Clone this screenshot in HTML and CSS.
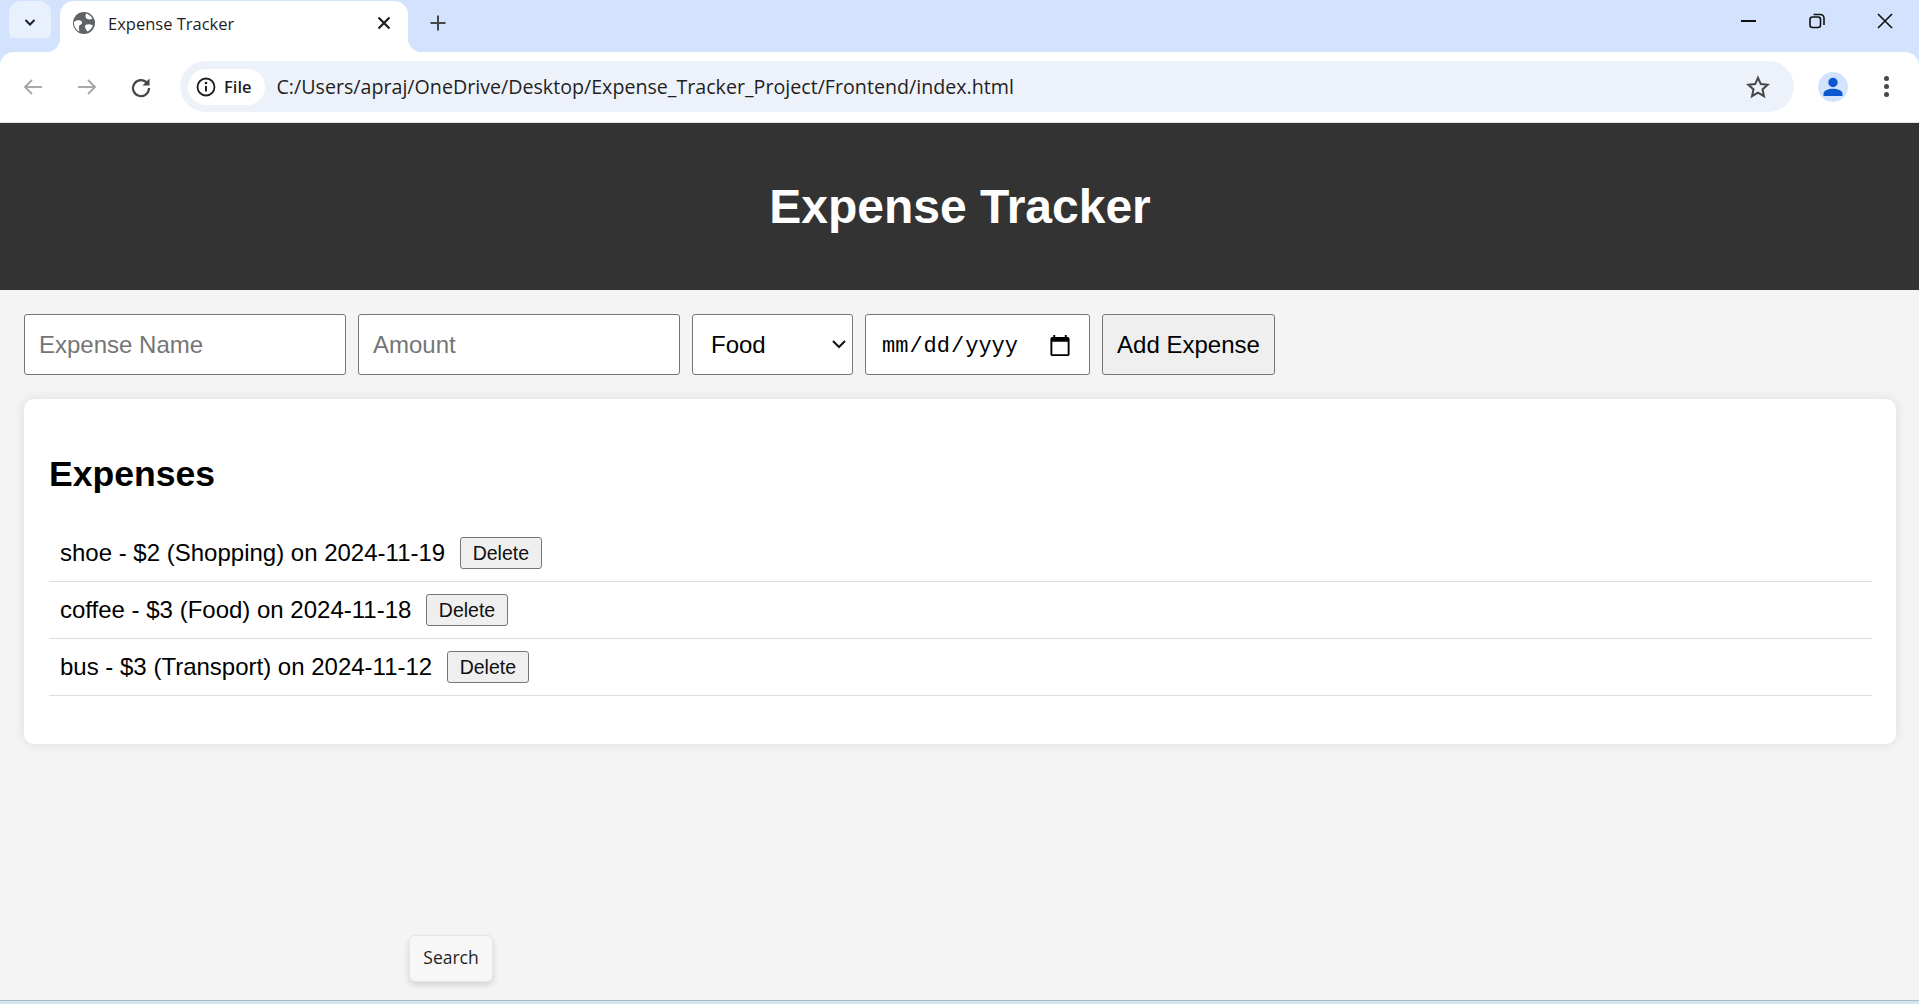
FILE: index.html
```html
<!DOCTYPE html>
<html lang="en">
<head>
    <meta charset="UTF-8">
    <meta name="viewport" content="width=device-width, initial-scale=1.0">
    <title>Expense Tracker</title>
    <link rel="stylesheet" href="styles.css">
</head>
<body>
    <!-- browser frame -->
    <div class="tabstrip">
        <div class="tab-search">
            <svg width="16" height="16" viewBox="0 0 16 16"><path d="M3.5 6l4.5 4.5L12.500 6" fill="none" stroke="#1f1f1f" stroke-width="2"/></svg>
        </div>
        <div class="tab">
            <svg class="favicon" width="22" height="22" viewBox="0 0 22 22">
                <circle cx="11" cy="11" r="11" fill="#5f6368"/>
                <path d="M.8 10c2.500-2 6-2.500 8-.5 1 1.200-.2 3-2 3.500-1.200.5-.8 3-.5 6.500C3.500 18.500 1 15 .8 10zM13 1.500c2.500.5 5 2.500 6.500 5-2 1.500-5.500 1-6.500-.5-.8-1.200-.5-3 0-4.500zM12.500 13c2-1 5-.8 7.500.5-1 2.500-3 5-5.500 6-1.500-1.500-3.500-5-2-6.500z" fill="#fff"/>
            </svg>
            <span class="tab-title">Expense Tracker</span>
            <svg class="tab-close" width="16" height="16" viewBox="0 0 16 16"><path d="M2.500 2.500l11 11M13.500 2.500l-11 11" stroke="#1f1f1f" stroke-width="2.200"/></svg>
        </div>
        <svg class="new-tab" width="18" height="18" viewBox="0 0 18 18"><path d="M9 1.500v15M1.500 9h15" stroke="#444746" stroke-width="2"/></svg>
        <div class="window-controls">
            <svg width="16" height="16" viewBox="0 0 16 16"><path d="M0 8h15" stroke="#111" stroke-width="2"/></svg>
            <svg width="16" height="16" viewBox="0 0 16 16"><rect x="1" y="4" width="10.500" height="10.500" rx="2.500" fill="none" stroke="#111" stroke-width="1.600"/><path d="M4.500 1.500h7a3.500 3.500 0 0 1 3.500 3.500v7" fill="none" stroke="#111" stroke-width="1.600"/></svg>
            <svg width="16" height="16" viewBox="0 0 16 16"><path d="M1 1l14 14M15 1L1 15" stroke="#111" stroke-width="1.600"/></svg>
        </div>
    </div>
    <div class="toolbar">
        <svg class="nav-icon back" width="22" height="22" viewBox="0 0 22 22"><path d="M20 11H3M10 4l-7 7 7 7" fill="none" stroke="#a8abae" stroke-width="2"/></svg>
        <svg class="nav-icon forward" width="22" height="22" viewBox="0 0 22 22"><path d="M2 11h17M12 4l7 7-7 7" fill="none" stroke="#a8abae" stroke-width="2"/></svg>
        <svg class="nav-icon reload" width="22" height="22" viewBox="0 0 22 22"><path d="M17.500 7.500A8 8 0 1 0 19 12" fill="none" stroke="#474747" stroke-width="2.200"/><path d="M19.500 2.500v7h-7z" fill="#474747"/></svg>
        <div class="omnibox">
            <div class="chip">
                <svg width="20" height="20" viewBox="0 0 20 20"><circle cx="10" cy="10" r="8.500" fill="none" stroke="#1f1f1f" stroke-width="1.800"/><path d="M10 9v5.500" stroke="#1f1f1f" stroke-width="2"/><circle cx="10" cy="6" r="1.300" fill="#1f1f1f"/></svg>
                <span>File</span>
            </div>
            <span class="url">C:/Users/apraj/OneDrive/Desktop/Expense_Tracker_Project/Frontend/index.html</span>
            <svg class="star" width="24" height="24" viewBox="0 0 24 24"><path d="M12 2.800l2.800 6.300 6.800.7-5.100 4.600 1.500 6.800-6-3.500-6 3.500 1.500-6.800-5.100-4.600 6.800-.7z" fill="none" stroke="#474747" stroke-width="2"/></svg>
        </div>
        <div class="avatar">
            <svg width="22" height="22" viewBox="0 0 22 22"><circle cx="11" cy="6.500" r="4.700" fill="#0b57d0"/><path d="M1.500 20v-2.500c0-3 5-4.700 9.500-4.700s9.500 1.700 9.500 4.700V20z" fill="#0b57d0"/></svg>
        </div>
        <div class="menu-dots"><i></i><i></i><i></i></div>
    </div>

    <!-- page -->
    <div class="page">
        <header class="site-header">
            <h1>Expense Tracker</h1>
        </header>
        <form class="expense-form">
            <input class="field field-text" type="text" placeholder="Expense Name">
            <input class="field field-text" type="number" placeholder="Amount">
            <select class="field field-select">
                <option>Food</option>
                <option>Transport</option>
                <option>Shopping</option>
                <option>Other</option>
            </select>
            <input class="field field-date" type="date">
            <button class="add-btn" type="button">Add Expense</button>
        </form>
        <section class="expense-card">
            <h2>Expenses</h2>
            <ul class="expense-list">
                <li>shoe - $2 (Shopping) on 2024-11-19 <button class="delete-btn" type="button">Delete</button></li>
                <li>coffee - $3 (Food) on 2024-11-18 <button class="delete-btn" type="button">Delete</button></li>
                <li>bus - $3 (Transport) on 2024-11-12 <button class="delete-btn" type="button">Delete</button></li>
            </ul>
        </section>
        <div class="search-tip">Search</div>
    </div>
    <div class="taskbar-edge"></div>
</body>
</html>
```

FILE: styles.css
```css
* {
    box-sizing: border-box;
}
html, body {
    height: 100%;
}
body {
    margin: 0;
    display: flex;
    flex-direction: column;
    overflow: hidden;
    background-color: #f4f4f4;
    font-family: "Liberation Sans", Arial, sans-serif;
}

/* browser frame */
.tabstrip {
    height: 52px;
    flex: none;
    display: flex;
    align-items: flex-start;
    background-color: #d3e3fd;
}
.tab-search {
    width: 42px;
    height: 42px;
    margin: 1px 0 0 9px;
    display: flex;
    align-items: center;
    justify-content: center;
    background-color: #e8f0fd;
    border-radius: 12px;
}
.tab {
    position: relative;
    width: 348px;
    height: 51px;
    margin: 1px 0 0 9px;
    padding: 0 16px 7px 13px;
    display: flex;
    align-items: center;
    background-color: #fff;
    border-radius: 14px 14px 0 0;
}
.tab::before, .tab::after {
    content: "";
    position: absolute;
    bottom: 0;
    width: 14px;
    height: 14px;
}
.tab::before {
    left: -14px;
    background: radial-gradient(circle at 0 0, #d3e3fd 14px, #fff 14.500px);
}
.tab::after {
    right: -14px;
    background: radial-gradient(circle at 100% 0, #d3e3fd 14px, #fff 14.500px);
}
.tab-title {
    flex: 1;
    margin-left: 13px;
    font-family: "Open Sans", sans-serif;
    font-size: 16.500px;
    color: #1f1f1f;
}
.new-tab {
    margin: 14px 0 0 21px;
}
.window-controls {
    margin-left: auto;
    padding: 13px 26px 0 0;
    display: flex;
    gap: 52px;
}
.toolbar {
    height: 71px;
    flex: none;
    display: flex;
    align-items: center;
    padding-bottom: 1px;
    background-color: #fff;
    border-bottom: 1px solid #e3e3e3;
    border-radius: 14px 14px 0 0;
    box-shadow: 0 -14px 0 #d3e3fd;
}
.nav-icon {
    flex: none;
}
.back {
    margin-left: 22px;
}
.forward {
    margin-left: 32px;
}
.reload {
    margin-left: 32px;
}
.omnibox {
    width: 1614px;
    height: 51px;
    margin-left: 28px;
    padding: 0 24px 0 8px;
    display: flex;
    align-items: center;
    background-color: #edf2fa;
    border-radius: 26px;
}
.chip {
    height: 36px;
    padding: 0 13px 0 8px;
    display: flex;
    align-items: center;
    gap: 8px;
    background-color: #fff;
    border-radius: 18px;
    font-family: "Open Sans", sans-serif;
    font-size: 16.500px;
    font-weight: 600;
    color: #1f1f1f;
}
.url {
    flex: 1;
    margin-left: 12px;
    font-family: "Open Sans", sans-serif;
    font-size: 19.650px;
    color: #1f1f1f;
}
.avatar {
    width: 30px;
    height: 30px;
    margin-left: 24px;
    display: flex;
    align-items: center;
    justify-content: center;
    background-color: #d3e3fd;
    border-radius: 50%;
}
.menu-dots {
    margin-left: 36px;
    display: flex;
    flex-direction: column;
    gap: 3px;
}
.menu-dots i {
    width: 5px;
    height: 5px;
    background-color: #474747;
    border-radius: 50%;
}

/* page */
.page {
    position: relative;
    flex: 1;
}
.site-header {
    height: 167px;
    padding-left: 1px;
    display: flex;
    align-items: center;
    justify-content: center;
    background-color: #333;
}
.site-header h1 {
    margin: 0;
    font-size: 48px;
    color: #fff;
}
.expense-form {
    padding: 24px 24px 24px;
    display: flex;
    gap: 12px;
}
.field, .add-btn {
    height: 61px;
    font-family: "Liberation Sans", Arial, sans-serif;
    font-size: 24px;
    border: 1px solid #767676;
    border-radius: 3px;
}
.field {
    background-color: #fff;
    color: #000;
}
.field-text {
    width: 322px;
    padding: 0 14px;
}
.field-text::placeholder {
    color: #757575;
}
.field-select {
    width: 161px;
    padding: 0 18px;
    appearance: none;
    background: #fff url("data:image/svg+xml,%3Csvg xmlns='http://www.w3.org/2000/svg' width='14' height='9'%3E%3Cpath d='M1 1l6 6 6-6' fill='none' stroke='%23111' stroke-width='2'/%3E%3C/svg%3E") no-repeat right 6px center;
}
.field-date {
    width: 225px;
    padding: 3px 17px 0 15px;
    font-family: "Liberation Mono", monospace;
    font-size: 22px;
}
.field-date::-webkit-calendar-picker-indicator {
    width: 24px;
    height: 24px;
    margin: 0;
    padding: 0;
}
.add-btn {
    width: 173px;
    background-color: #efefef;
    color: #000;
}
.expense-card {
    height: 345px;
    margin: 0 23px 0 24px;
    padding: 1px 24px 0 25px;
    background-color: #fff;
    border-radius: 10px;
    box-shadow: 0 0 12px rgba(0, 0, 0, 0.1);
}
.expense-card h2 {
    margin: 54px 0 30px;
    font-size: 35.600px;
    line-height: 41px;
    color: #000;
}
.expense-list {
    margin: 0;
    padding: 0;
    list-style: none;
}
.expense-list li {
    padding: 12px 12px 12px 11px;
    border-bottom: 1px solid #ddd;
    font-size: 24px;
    line-height: 32px;
    color: #000;
}
.delete-btn {
    height: 32px;
    width: 82px;
    margin-left: 8px;
    padding: 0;
    vertical-align: top;
    font-family: "Liberation Sans", Arial, sans-serif;
    font-size: 19.500px;
    color: #111;
    background-color: #efefef;
    border: 1px solid #767676;
    border-radius: 3px;
}
.search-tip {
    position: absolute;
    left: 409px;
    top: 812px;
    width: 84px;
    height: 47px;
    padding-bottom: 4px;
    display: flex;
    align-items: center;
    justify-content: center;
    font-family: "Open Sans", sans-serif;
    font-size: 17.500px;
    color: #1f1f1f;
    background-color: #f7f7f7;
    border: 1px solid #e6e6e6;
    border-radius: 6px;
    box-shadow: 0 3px 6px rgba(0, 0, 0, 0.14);
}
.taskbar-edge {
    height: 4px;
    flex: none;
    background-color: #d3e7f0;
    border-top: 1px solid #a9bcc6;
}
```
